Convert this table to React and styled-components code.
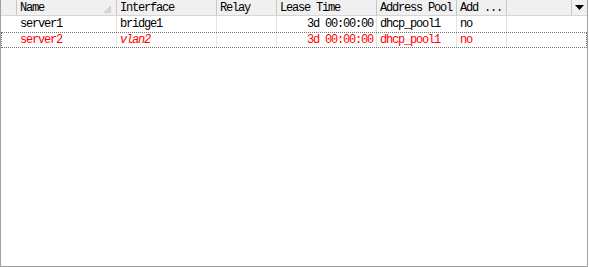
import styled, { createGlobalStyle } from "styled-components";

const GlobalStyle = createGlobalStyle`
  body {
    margin: 0;
    background: #ffffff;
    font-family: "Liberation Mono", "DejaVu Sans Mono", monospace;
  }
`;

const COLS = "16px 100px 100px 60px 100px 80px 50px 65px 15px";

const Frame = styled.div`
  width: 588px;
  height: 267px;
  box-sizing: border-box;
  border: 1px solid #a0a0a0;
  border-top: none;
  background: #ffffff;
  overflow: hidden;
`;

const HeaderRow = styled.div`
  display: grid;
  grid-template-columns: ${COLS};
  height: 16px;
  box-sizing: border-box;
  background: #f0f0f0;
  border-bottom: 1px solid #d5d5d5;
`;

const HeadCell = styled.div`
  position: relative;
  display: flex;
  align-items: center;
  justify-content: ${(p) => (p.$center ? "center" : "flex-start")};
  padding-left: ${(p) => (p.$center ? 0 : 3)}px;
  border-right: ${(p) => (p.$last ? "none" : "1px solid #c8c8c8")};
  font-size: 12px;
  letter-spacing: -1.2px;
  color: #000000;
  white-space: nowrap;
  overflow: hidden;
`;

const SortMark = styled.svg`
  position: absolute;
  right: 5px;
  top: 6px;
`;

const Row = styled.div`
  display: grid;
  grid-template-columns: ${COLS};
  height: 16px;
  color: ${(p) => (p.$disabled ? "#ff0000" : "#000000")};
  outline: ${(p) => (p.$focused ? "1px dotted #707070" : "none")};
  outline-offset: -1px;
`;

const Cell = styled.div`
  display: flex;
  align-items: center;
  justify-content: ${(p) => (p.$right ? "flex-end" : "flex-start")};
  padding: 0 3px;
  border-right: ${(p) => (p.$bare ? "none" : "1px solid #e4e4e4")};
  font-size: 12px;
  letter-spacing: -1.2px;
  font-style: ${(p) => (p.$italic ? "italic" : "normal")};
  white-space: nowrap;
  overflow: hidden;
`;

const leases = [
  { name: "server1", iface: "bridge1", relay: "", time: "3d 00:00:00", pool: "dhcp_pool1", add: "no" },
  { name: "server2", iface: "vlan2", relay: "", time: "3d 00:00:00", pool: "dhcp_pool1", add: "no", disabled: true, italicIface: true, focused: true },
];

const App = () => {
  return (
    <>
      <GlobalStyle />
      <Frame>
        <HeaderRow>
          <HeadCell />
          <HeadCell>
            Name
            <SortMark width="7" height="7" viewBox="0 0 7 7">
              <polygon points="0,6.5 6.5,0 6.5,6.5" fill="#d6d6d6" stroke="#c4c4c4" strokeWidth="0.6" />
            </SortMark>
          </HeadCell>
          <HeadCell>Interface</HeadCell>
          <HeadCell>Relay</HeadCell>
          <HeadCell>Lease Time</HeadCell>
          <HeadCell>Address Pool</HeadCell>
          <HeadCell>Add ...</HeadCell>
          <HeadCell />
          <HeadCell $center $last>
            <svg width="9" height="5" viewBox="0 0 9 5">
              <polygon points="0,0 9,0 4.5,5" fill="#000000" />
            </svg>
          </HeadCell>
        </HeaderRow>
        {leases.map((l) => (
          <Row key={l.name} $disabled={l.disabled} $focused={l.focused}>
            <Cell $bare />
            <Cell>{l.name}</Cell>
            <Cell $italic={l.italicIface}>{l.iface}</Cell>
            <Cell>{l.relay}</Cell>
            <Cell $right>{l.time}</Cell>
            <Cell>{l.pool}</Cell>
            <Cell>{l.add}</Cell>
            <Cell $bare />
            <Cell $bare />
          </Row>
        ))}
      </Frame>
    </>
  );
};

export default App;
